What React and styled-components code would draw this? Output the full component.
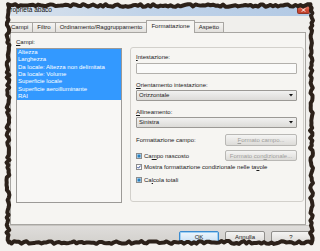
import React from "react";
import styled, { createGlobalStyle } from "styled-components";

const GlobalStyle = createGlobalStyle`
  html, body {
    margin: 0;
    padding: 0;
  }
  body {
    width: 320px;
    height: 251px;
    overflow: hidden;
    background: #f3f1ed;
    font-family: "Liberation Sans", Arial, sans-serif;
    font-size: 6px;
    color: #1a1a1a;
  }
`;

const Page = styled.div`
  position: relative;
  width: 320px;
  height: 251px;
  padding: 6px 0 0 8px;
  box-sizing: border-box;
`;

const Dialog = styled.div`
  width: 304px;
  height: 236px;
  display: flex;
  flex-direction: column;
  background: #f0efec;
  overflow: hidden;
`;

const TitleBar = styled.div`
  height: 10px;
  flex: none;
  display: flex;
  justify-content: space-between;
  align-items: flex-start;
  background: linear-gradient(to right, #d9e2ec, #c0d3e9 45%, #b2c9e4);
  font-size: 6.5px;
  line-height: 8px;
  color: #111;
`;

const Title = styled.span`
  margin-left: -2px;
  white-space: nowrap;
`;

const CloseButton = styled.div`
  width: 13px;
  height: 8px;
  margin-right: 2px;
  display: flex;
  align-items: center;
  justify-content: center;
  background: linear-gradient(#e8826c, #cf4a33 60%, #c2412c);
  border: 1px solid #8f3426;
  border-top: none;
  border-radius: 0 0 2px 2px;
  box-sizing: border-box;
`;

const TabStrip = styled.div`
  height: 16px;
  flex: none;
  display: flex;
  align-items: flex-end;
  margin-left: -2px;
`;

const Tab = styled.div`
  position: relative;
  height: ${(p) => (p.active ? "13px" : "10px")};
  margin-bottom: ${(p) => (p.active ? "-1px" : "0")};
  margin-right: -1px;
  z-index: ${(p) => (p.active ? 1 : 0)};
  padding: 0 4px;
  box-sizing: border-box;
  border: 1px solid #a8a6a2;
  border-bottom: none;
  border-radius: 1px 1px 0 0;
  background: ${(p) =>
    p.active ? "#f6f5f2" : "linear-gradient(#f6f5f3, #e2e0dc)"};
  line-height: ${(p) => (p.active ? "11px" : "9px")};
  white-space: nowrap;
`;

const TabPanel = styled.div`
  margin-left: 2px;
  width: 296px;
  height: 193px;
  flex: none;
  box-sizing: border-box;
  border: 1px solid #a8a6a2;
  background: #f6f5f2;
  padding: 6px 1px 0 5px;
  display: flex;
  gap: 8px;
`;

const FieldColumn = styled.div`
  width: 106px;
  display: flex;
  flex-direction: column;
`;

const Label = styled.div`
  line-height: 7px;
  height: 7px;
  white-space: nowrap;
  margin-top: ${(p) => p.gap || 0}px;
`;

const U = styled.span`
  text-decoration: underline;
`;

const ListBox = styled.div`
  margin-top: 2px;
  height: 155px;
  box-sizing: border-box;
  border: 1px solid #9c9a97;
  background: #f8f7f5;
  overflow: hidden;
`;

const ListItem = styled.div`
  height: 7.35px;
  line-height: 7.35px;
  padding-left: 1px;
  white-space: nowrap;
  background: ${(p) => (p.selected ? "#3399ff" : "transparent")};
  color: ${(p) => (p.selected ? "#fff" : "#1a1a1a")};
`;

const GroupBox = styled.div`
  margin-top: 8px;
  width: 174px;
  height: 155px;
  box-sizing: border-box;
  border: 1px solid #d2d0cb;
  border-radius: 3px;
  padding: 6px 6px 0 5px;
  display: flex;
  flex-direction: column;
`;

const TextBox = styled.div`
  margin-top: 2px;
  height: 11px;
  flex: none;
  box-sizing: border-box;
  border: 1px solid #b2b0ac;
  border-radius: 1px;
  background: #fafaf9;
`;

const Select = styled.div`
  margin-top: 1px;
  height: 11px;
  flex: none;
  box-sizing: border-box;
  border: 1px solid #9b9995;
  border-radius: 1px;
  background: linear-gradient(#f1f1f0, #dcdbd8);
  display: flex;
  align-items: center;
  justify-content: space-between;
  padding: 0 3px 0 2px;
  line-height: 9px;
`;

const ButtonRow = styled.div`
  margin-top: ${(p) => p.gap}px;
  height: ${(p) => p.h}px;
  flex: none;
  display: flex;
  align-items: center;
  justify-content: space-between;
`;

const PushButton = styled.div`
  width: ${(p) => p.w || 72}px;
  height: ${(p) => p.h}px;
  flex: none;
  box-sizing: border-box;
  border: 1px solid ${(p) => (p.primary ? "#3a8bd0" : p.disabled ? "#b9b8b5" : "#8f8e8b")};
  border-radius: 2px;
  background: ${(p) =>
    p.primary
      ? "linear-gradient(#eef6fd, #dcecf9 50%, #c9e0f3)"
      : "linear-gradient(#f4f4f3, #e9e8e6 50%, #dcdbd8)"};
  box-shadow: ${(p) => (p.primary ? "inset 0 0 0 1px #9fd0f3" : "none")};
  color: ${(p) => (p.disabled ? "#9f9e9b" : "#1a1a1a")};
  display: flex;
  align-items: center;
  justify-content: center;
  white-space: nowrap;
`;

const CheckRow = styled.div`
  height: ${(p) => p.h}px;
  flex: none;
  display: flex;
  align-items: center;
  gap: 2px;
  white-space: nowrap;
`;

const CheckBox = styled.div`
  width: 6px;
  height: 6px;
  flex: none;
  box-sizing: border-box;
  border: 1px solid #8c8c8c;
  background: ${(p) =>
    p.checked ? "#fbfbfb" : "linear-gradient(135deg, #2d8ed3, #1f6fa8)"};
  box-shadow: ${(p) => (p.checked ? "none" : "inset 0 0 0 0.5px #cfe6f5")};
  display: flex;
  align-items: center;
  justify-content: center;
`;

const Footer = styled.div`
  flex: 1;
  border-top: 1px solid #c6c4c0;
  background: linear-gradient(#dfdddb, #d3d1cd);
  display: flex;
  justify-content: flex-end;
  align-items: flex-start;
  padding: 5px 1px 0 0;
  gap: 6px;
`;

const FrameArt = styled.svg`
  position: absolute;
  top: 0;
  left: 0;
  pointer-events: none;
`;

function makeRand(seed) {
  let s = seed;
  return () => {
    s = (s * 16807) % 2147483647;
    return s / 2147483647;
  };
}

function raggedPath() {
  const r = makeRand(11);
  const j = (a) => (r() - 0.5) * a;
  const pts = [];
  for (let x = 8; x < 311; x += 2.5) pts.push([x, 5.5 + j(2.6)]);
  for (let y = 5.5; y < 242; y += 2.5) pts.push([311.5 + j(3), y]);
  for (let x = 311.5; x > 8; x -= 2.5) pts.push([x, 242.5 + j(2.8)]);
  for (let y = 242.5; y > 5.5; y -= 2.5) pts.push([8 + j(3), y]);
  return "M" + pts.map((p) => p[0].toFixed(1) + " " + p[1].toFixed(1)).join(" L") + " Z";
}

const frame = raggedPath();

function TornFrame() {
  return (
    <FrameArt width="320" height="251" viewBox="0 0 320 251">
      <path d={"M0 0 H320 V251 H0 Z " + frame} fill="#f3f1ed" fillRule="evenodd" />
      <path d={frame} fill="none" stroke="#2c2119" strokeWidth="4" strokeLinejoin="round" />
    </FrameArt>
  );
}

function Arrow() {
  return (
    <svg width="4" height="3" viewBox="0 0 4 3">
      <polygon points="0,0 4,0 2,2.5" fill="#111" />
    </svg>
  );
}

function Check() {
  return (
    <svg width="4" height="4" viewBox="0 0 4 4">
      <path d="M0.4 2 L1.5 3.2 L3.6 0.6" fill="none" stroke="#1d3c8f" strokeWidth="0.9" />
    </svg>
  );
}

const fields = [
  "Altezza",
  "Larghezza",
  "Da locale: Altezza non delimitata",
  "Da locale: Volume",
  "Superficie locale",
  "Superficie aeroilluminante",
  "RAI",
];

const tabs = ["Campi", "Filtro", "Ordinamento/Raggruppamento", "Formattazione", "Aspetto"];

export default function App() {
  return (
    <Page>
      <GlobalStyle />
      <Dialog>
        <TitleBar>
          <Title>Proprietà abaco</Title>
          <CloseButton>
            <svg width="5" height="4" viewBox="0 0 5 4">
              <path d="M0.8 0.3 L4.2 3.7 M4.2 0.3 L0.8 3.7" stroke="#fff" strokeWidth="1" />
            </svg>
          </CloseButton>
        </TitleBar>
        <TabStrip>
          {tabs.map((t) => (
            <Tab key={t} active={t === "Formattazione"}>
              {t}
            </Tab>
          ))}
        </TabStrip>
        <TabPanel>
          <FieldColumn>
            <Label>
              <U>C</U>ampi:
            </Label>
            <ListBox>
              {fields.map((f) => (
                <ListItem key={f} selected>
                  {f}
                </ListItem>
              ))}
            </ListBox>
          </FieldColumn>
          <GroupBox>
            <Label>
              <U>I</U>ntestazione:
            </Label>
            <TextBox />
            <Label gap={8}>
              <U>O</U>rientamento intestazione:
            </Label>
            <Select>
              Orizzontale
              <Arrow />
            </Select>
            <Label gap={8}>
              <U>A</U>llineamento:
            </Label>
            <Select>
              Sinistra
              <Arrow />
            </Select>
            <ButtonRow gap={6} h={12}>
              <span>Formattazione campo:</span>
              <PushButton disabled h={12}>
                <span>
                  <U>F</U>ormato campo...
                </span>
              </PushButton>
            </ButtonRow>
            <ButtonRow gap={4} h={11}>
              <CheckRow h={11}>
                <CheckBox />
                <span>
                  Ca<U>m</U>po nascosto
                </span>
              </CheckRow>
              <PushButton disabled h={11}>
                <span>
                  Formato con<U>d</U>izionale...
                </span>
              </PushButton>
            </ButtonRow>
            <CheckRow h={12.5}>
              <CheckBox checked>
                <Check />
              </CheckBox>
              <span>
                Mostra formattazione condizionale nelle ta<U>v</U>ole
              </span>
            </CheckRow>
            <CheckRow h={12.5}>
              <CheckBox />
              <span>
                Ca<U>l</U>cola totali
              </span>
            </CheckRow>
          </GroupBox>
        </TabPanel>
        <Footer>
          <PushButton primary w={40} h={12}>
            OK
          </PushButton>
          <PushButton w={40} h={12}>
            Annulla
          </PushButton>
          <PushButton w={40} h={12}>
            ?
          </PushButton>
        </Footer>
      </Dialog>
      <TornFrame />
    </Page>
  );
}
